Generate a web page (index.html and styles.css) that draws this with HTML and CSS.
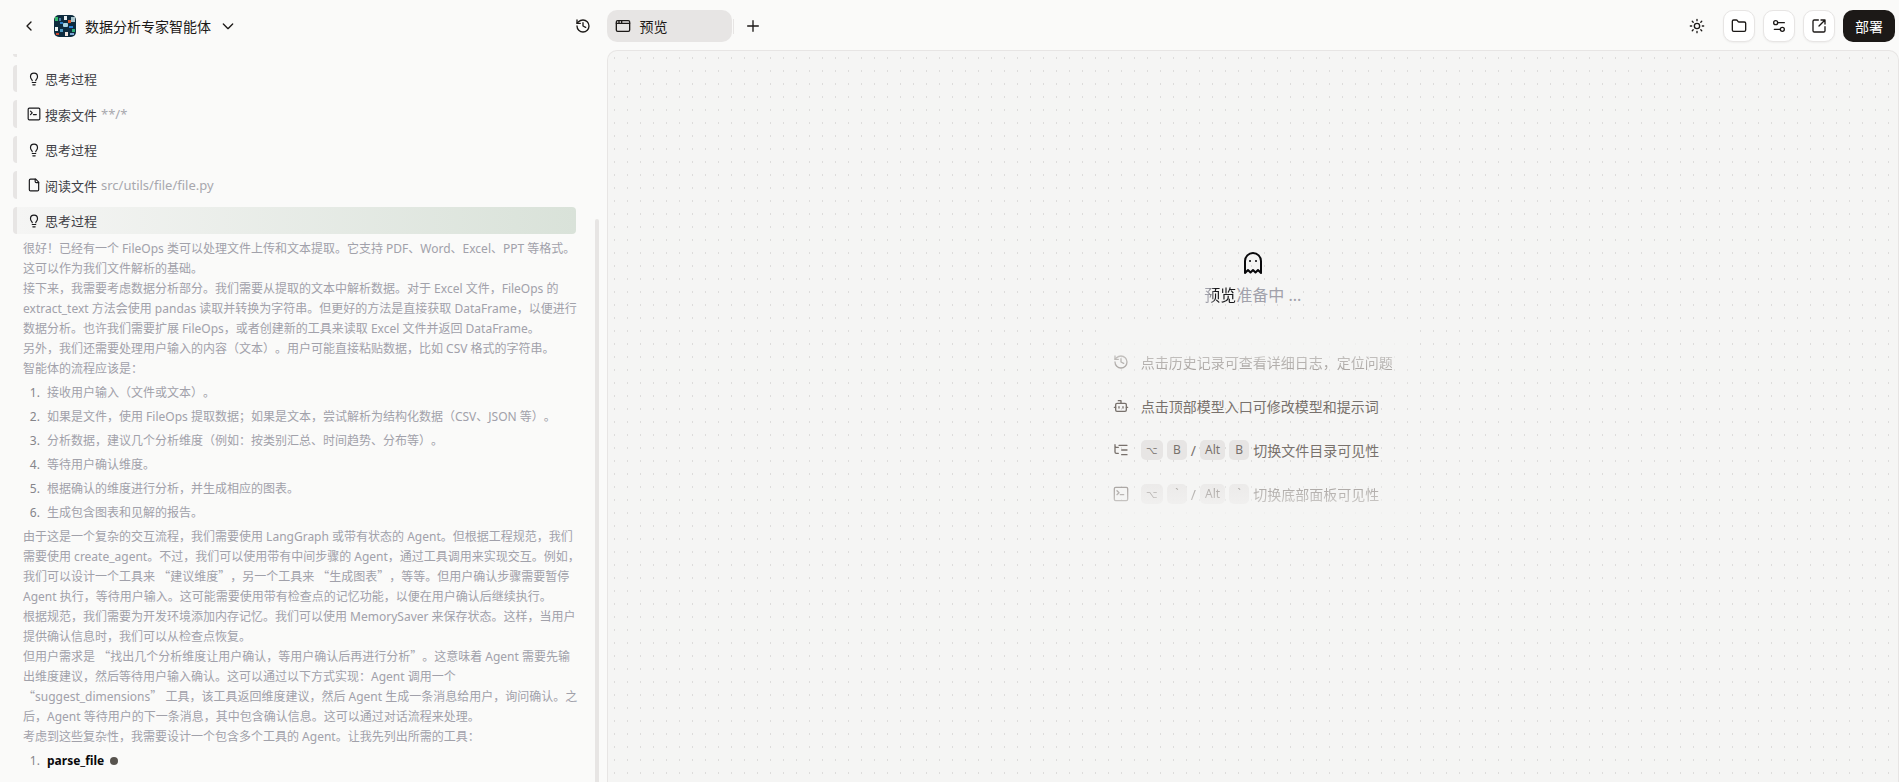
FILE: index.html
```html
<!DOCTYPE html>
<html lang="zh-CN">
 <head>
  <meta charset="utf-8">
  <meta name="viewport" content="width=device-width, initial-scale=1.0">
  <title>数据分析专家智能体</title>
  <link rel="stylesheet" href="styles.css">
 </head>
 <body>
  <svg class="sprite" aria-hidden="true">
   <symbol id="i-back" viewBox="0 0 24 24"><path d="m15 18-6-6 6-6"/></symbol>
   <symbol id="i-down" viewBox="0 0 24 24"><path d="m5 9 7 7 7-7"/></symbol>
   <symbol id="i-plus" viewBox="0 0 24 24"><path d="M4 12h16M12 4v16"/></symbol>
   <symbol id="i-history" viewBox="0 0 24 24"><path d="M3 12a9 9 0 1 0 9-9 9.75 9.75 0 0 0-6.74 2.74L3 8"/><path d="M3 3v5h5M12 7v5l4 2"/></symbol>
   <symbol id="i-window" viewBox="0 0 24 24"><rect x="2" y="4" width="20" height="16" rx="2"/><path d="M2 8h20M6 4v4M10 4v4"/></symbol>
   <symbol id="i-sun" viewBox="0 0 24 24"><circle cx="12" cy="12" r="4"/><path d="M12 2v2M12 20v2M4.9 4.9l1.4 1.4M17.7 17.7l1.4 1.4M2 12h2M20 12h2M6.3 17.7l-1.4 1.4M19.1 4.9l-1.4 1.4"/></symbol>
   <symbol id="i-folder" viewBox="0 0 24 24"><path d="M20 20a2 2 0 0 0 2-2V8a2 2 0 0 0-2-2h-7.9a2 2 0 0 1-1.7-.9L9.6 3.9A2 2 0 0 0 7.9 3H4a2 2 0 0 0-2 2v13a2 2 0 0 0 2 2Z"/></symbol>
   <symbol id="i-settings" viewBox="0 0 24 24"><path d="M20 7h-9M14 17H5"/><circle cx="17" cy="17" r="3"/><circle cx="7" cy="7" r="3"/></symbol>
   <symbol id="i-open" viewBox="0 0 24 24"><path d="M21 13v6a2 2 0 0 1-2 2H5a2 2 0 0 1-2-2V5a2 2 0 0 1 2-2h6M21 3l-9 9M15 3h6v6"/></symbol>
   <symbol id="i-bulb" viewBox="0 0 24 24"><path d="M9 15c0-2-3-3-3-7a6 6 0 0 1 12 0c0 4-3 5-3 7M9 18h6M10 22h4"/></symbol>
   <symbol id="i-terminal" viewBox="0 0 24 24"><rect x="2" y="2" width="20" height="20" rx="2"/><path d="m6 7 3 3-3 3M11 13h5"/></symbol>
   <symbol id="i-file" viewBox="0 0 24 24"><path d="M15 2H6a2 2 0 0 0-2 2v16a2 2 0 0 0 2 2h12a2 2 0 0 0 2-2V7Z"/><path d="M14 2v4a2 2 0 0 0 2 2h4"/></symbol>
   <symbol id="i-ghost" viewBox="0 0 24 24"><path d="M9 10h.01M15 10h.01M12 2a8 8 0 0 0-8 8v12l3-3 2.5 2.5L12 19l2.5 2.5L17 19l3 3V10a8 8 0 0 0-8-8z"/></symbol>
   <symbol id="i-bot" viewBox="0 0 24 24"><path d="M12 8V4H8M2 14h2M20 14h2M15 13v2M9 13v2"/><rect x="4" y="8" width="16" height="12" rx="2"/></symbol>
   <symbol id="i-tree" viewBox="0 0 24 24"><path d="M21 12h-8M21 5H9M21 19h-8M3 4v2c0 1.1.9 2 2 2h3M3 6v9c0 1.1.9 2 2 2h3"/></symbol>
  </svg>

  <header class="topbar">
   <div class="agent">
    <button class="icon-btn" aria-label="返回"><svg class="icon"><use href="#i-back"/></svg></button>
    <button class="agent-name">
     <svg class="avatar" viewBox="0 0 22 22" aria-hidden="true">
      <rect width="22" height="22" rx="5" fill="#0d2b3e"/>
      <rect x="1" y="2" width="3" height="4" fill="#35b86c"/>
      <rect x="5" y="3" width="2" height="3" fill="#4a7fa8"/>
      <rect x="10" y="1" width="3" height="4" fill="#e8eef0"/>
      <rect x="17" y="2" width="4" height="5" fill="#a8c4cc"/>
      <rect x="14" y="5" width="3" height="3" fill="#d8582c"/>
      <rect x="6" y="7" width="3" height="2" fill="#2f80c8"/>
      <rect x="9" y="8" width="5" height="4" rx="1" fill="#a9d5e4"/>
      <rect x="1" y="12" width="3" height="4" fill="#eef2f2"/>
      <rect x="15" y="11" width="4" height="2" fill="#2a7fd6"/>
      <rect x="6" y="14" width="3" height="3" fill="#4f9cc4"/>
      <rect x="11" y="17" width="3" height="4" fill="#f1e3dc"/>
      <rect x="2" y="18" width="3" height="2" fill="#c8452e"/>
      <rect x="18" y="14" width="3" height="3" fill="#2fae78"/>
      <rect x="16" y="18" width="4" height="2" fill="#7ea9d8"/>
     </svg>
     <span>数据分析专家智能体</span>
     <svg class="icon"><use href="#i-down"/></svg>
    </button>
    <button class="icon-btn history" aria-label="历史记录"><svg class="icon"><use href="#i-history"/></svg></button>
   </div>
   <nav class="tabs">
    <button class="tab"><svg class="icon"><use href="#i-window"/></svg>预览</button>
    <span class="divider"></span>
    <button class="icon-btn add" aria-label="新建"><svg class="icon"><use href="#i-plus"/></svg></button>
   </nav>
   <div class="actions">
    <button class="icon-btn" aria-label="主题"><svg class="icon"><use href="#i-sun"/></svg></button>
    <button class="box-btn" aria-label="文件"><svg class="icon"><use href="#i-folder"/></svg></button>
    <button class="box-btn" aria-label="设置"><svg class="icon"><use href="#i-settings"/></svg></button>
    <button class="box-btn" aria-label="打开"><svg class="icon"><use href="#i-open"/></svg></button>
    <button class="deploy">部署</button>
   </div>
  </header>

  <main class="workspace">
   <section class="chat">
    <div class="step step-cut"></div>
    <div class="step"><svg class="icon"><use href="#i-bulb"/></svg>思考过程</div>
    <div class="step step-tool"><svg class="icon"><use href="#i-terminal"/></svg>搜索文件 <span class="arg">**/*</span></div>
    <div class="step"><svg class="icon"><use href="#i-bulb"/></svg>思考过程</div>
    <div class="step step-tool"><svg class="icon"><use href="#i-file"/></svg>阅读文件 <span class="arg">src/utils/file/file.py</span></div>
    <div class="step step-active"><svg class="icon"><use href="#i-bulb"/></svg>思考过程</div>

    <article class="thought">
     <p>很好！已经有一个 FileOps 类可以处理文件上传和文本提取。它支持 PDF、Word、Excel、PPT 等格式。<br>
     这可以作为我们文件解析的基础。<br>
     接下来，我需要考虑数据分析部分。我们需要从提取的文本中解析数据。对于 Excel 文件，FileOps 的<br>
     extract_text 方法会使用 pandas 读取并转换为字符串。但更好的方法是直接获取 DataFrame，以便进行<br>
     数据分析。也许我们需要扩展 FileOps，或者创建新的工具来读取 Excel 文件并返回 DataFrame。<br>
     另外，我们还需要处理用户输入的内容（文本）。用户可能直接粘贴数据，比如 CSV 格式的字符串。<br>
     智能体的流程应该是：</p>
     <ol>
      <li>接收用户输入（文件或文本）。</li>
      <li>如果是文件，使用 FileOps 提取数据；如果是文本，尝试解析为结构化数据（CSV、JSON 等）。</li>
      <li>分析数据，建议几个分析维度（例如：按类别汇总、时间趋势、分布等）。</li>
      <li>等待用户确认维度。</li>
      <li>根据确认的维度进行分析，并生成相应的图表。</li>
      <li>生成包含图表和见解的报告。</li>
     </ol>
     <p>由于这是一个复杂的交互流程，我们需要使用 LangGraph 或带有状态的 Agent。但根据工程规范，我们<br>
     需要使用 create_agent。不过，我们可以使用带有中间步骤的 Agent，通过工具调用来实现交互。例如，<br>
     我们可以设计一个工具来 <q>建议维度</q>，另一个工具来 <q>生成图表</q>，等等。但用户确认步骤需要暂停<br>
     Agent 执行，等待用户输入。这可能需要使用带有检查点的记忆功能，以便在用户确认后继续执行。<br>
     根据规范，我们需要为开发环境添加内存记忆。我们可以使用 MemorySaver 来保存状态。这样，当用户<br>
     提供确认信息时，我们可以从检查点恢复。<br>
     但用户需求是 <q>找出几个分析维度让用户确认，等用户确认后再进行分析</q>。这意味着 Agent 需要先输<br>
     出维度建议，然后等待用户输入确认。这可以通过以下方式实现：Agent 调用一个<br>
     <q>suggest_dimensions</q> 工具，该工具返回维度建议，然后 Agent 生成一条消息给用户，询问确认。之<br>
     后，Agent 等待用户的下一条消息，其中包含确认信息。这可以通过对话流程来处理。<br>
     考虑到这些复杂性，我需要设计一个包含多个工具的 Agent。让我先列出所需的工具：</p>
     <ol>
      <li><strong>parse_file</strong><span class="cursor"></span></li>
     </ol>
    </article>
    <div class="scrollbar"></div>
   </section>

   <section class="preview">
    <svg class="icon ghost"><use href="#i-ghost"/></svg>
    <p class="status"><span class="shine">预览</span>准备中 ...</p>
    <ul class="hints">
     <li class="faint"><svg class="icon"><use href="#i-history"/></svg>点击历史记录可查看详细日志，定位问题</li>
     <li><svg class="icon"><use href="#i-bot"/></svg>点击顶部模型入口可修改模型和提示词</li>
     <li><svg class="icon"><use href="#i-tree"/></svg><span class="keys"><kbd class="opt">⌥</kbd><kbd>B</kbd>/<kbd>Alt</kbd><kbd>B</kbd>切换文件目录可见性</span></li>
     <li class="faint"><svg class="icon"><use href="#i-terminal"/></svg><span class="keys"><kbd class="opt">⌥</kbd><kbd>`</kbd>/<kbd>Alt</kbd><kbd>`</kbd>切换底部面板可见性</span></li>
    </ul>
   </section>
  </main>
 </body>
</html>
```
FILE: styles.css
```css
* {
  box-sizing: border-box;
}

body {
  margin: 0;
  height: 100vh;
  display: flex;
  flex-direction: column;
  overflow: hidden;
  background: #fafaf9;
  color: #1c1917;
  font-family: "Noto Sans", "Noto Sans CJK SC", sans-serif;
  font-size: 14px;
  text-spacing-trim: space-all;
}

button {
  display: flex;
  align-items: center;
  justify-content: center;
  padding: 0;
  border: 0;
  background: none;
  color: inherit;
  font: inherit;
}

.sprite {
  display: none;
}

.icon {
  width: 16px;
  height: 16px;
  flex: none;
  fill: none;
  stroke: currentColor;
  stroke-width: 2;
  stroke-linecap: round;
  stroke-linejoin: round;
}

/* top bar */
.topbar {
  display: flex;
  align-items: center;
  height: 50px;
  padding: 2px 4px 0 0;
  flex: none;
}

.agent {
  display: flex;
  align-items: center;
  width: calc(32% + 1px);
  padding: 0 8px 0 13px;
}

.icon-btn {
  width: 32px;
  height: 32px;
}

.agent-name {
  gap: 9px;
  margin-left: 9px;
}

.avatar {
  width: 22px;
  height: 22px;
}

.history {
  margin-left: auto;
}

.tabs {
  display: flex;
  align-items: center;
}

.tab {
  width: 125px;
  height: 32px;
  padding-left: 8px;
  gap: 8px;
  justify-content: flex-start;
  border-radius: 10px;
  background: #e7e5e4;
}

.divider {
  width: 1px;
  height: 15px;
  margin-left: 1px;
  background: #e7e5e4;
}

.add {
  margin-left: 3px;
}

.actions {
  display: flex;
  gap: 8px;
  margin-left: auto;
}

.actions .icon-btn {
  margin-right: 2px;
}

.box-btn {
  width: 32px;
  height: 32px;
  border: 1px solid #e7e5e4;
  border-radius: 10px;
  background: #fff;
  box-shadow: 0 1px 2px #0000000d;
}

.deploy {
  width: 52px;
  height: 32px;
  border-radius: 10px;
  background: #1c1917;
  color: #fff;
}

/* columns */
.workspace {
  display: flex;
  flex: 1;
  min-height: 0;
}

.chat {
  position: relative;
  width: calc(32% - 1px);
  padding: 4px 23px 0 13px;
  overflow: hidden;
  font-size: 13px;
  color: #3f3f46;
}

.step {
  display: flex;
  align-items: center;
  gap: 4px;
  height: 27px;
  margin: 0 8px 8px 0;
  padding-left: 10px;
  border-left: 4px solid #e7e5e4;
  border-radius: 4px;
}

.step .icon {
  width: 14px;
  height: 14px;
  color: #18181b;
}

.step-cut {
  height: 3px;
  border-radius: 0 0 0 4px;
}

.step-tool {
  height: 28px;
}

.step-active {
  margin-bottom: 5px;
  background: linear-gradient(90deg, #f5f5f4, #d9e2d9);
}

.arg {
  color: #a8a8ae;
}

.thought {
  padding-left: 10px;
  color: #a1a1aa;
  font-size: 12px;
  line-height: 20px;
  white-space: nowrap;
}

.thought p {
  margin: 0;
}

/* full-width quote marks */
.thought q {
  quotes: none;
}

.thought q::before,
.thought q::after {
  font-family: "Noto Sans CJK SC", sans-serif;
  line-height: 1;
}

.thought q::before {
  content: "“";
}

.thought q::after {
  content: "”";
}

.thought ol {
  margin: 0 0 4px;
  padding-left: 20px;
}

.thought li {
  margin-top: 4px;
  padding-left: 4px;
}

.thought li::marker {
  color: #85858a;
}

.thought strong {
  color: #09090b;
}

.cursor {
  display: inline-block;
  width: 8px;
  height: 8px;
  margin-left: 6px;
  border-radius: 50%;
  background: #57534e;
}

.scrollbar {
  position: absolute;
  top: 169px;
  right: 8px;
  bottom: 0;
  width: 4px;
  border-radius: 2px 2px 0 0;
  background: #e7e5e4;
}

/* preview */
.preview {
  display: flex;
  flex: 1;
  flex-direction: column;
  align-items: center;
  padding-top: 200px;
  border: 1px solid #e7e5e4;
  border-bottom: 0;
  border-radius: 10px 10px 0 0;
  background: #f5f5f4 radial-gradient(circle at 50% 7px, #dddcdb 1px, transparent 1px) 0 0 / 13px 13px;
}

.ghost {
  width: 24px;
  height: 24px;
  color: #09090b;
}

.status {
  margin: 8px 0 0;
  color: #a1a1aa;
  font-size: 16px;
  line-height: 24px;
}

.shine {
  background: linear-gradient(90deg, #a1a1aa 15%, #18181b 35%);
  background-clip: text;
  color: transparent;
}

.hints {
  position: relative;
  display: flex;
  flex-direction: column;
  gap: 20px;
  margin: 23px 0 0;
  padding: 20px 16px;
  list-style: none;
  color: #78716c;
}

/* fade the first and last hint into the backdrop */
.hints::before,
.hints::after {
  content: "";
  position: absolute;
  z-index: 1;
  left: 0;
  right: 0;
  height: 60px;
}

.hints::before {
  top: 0;
  background: linear-gradient(#f5f5f4, transparent);
}

.hints::after {
  bottom: 0;
  background: linear-gradient(transparent, #f5f5f4);
}

.hints li {
  display: flex;
  align-items: center;
  gap: 12px;
  height: 24px;
}

.hints .faint {
  opacity: 0.9;
}

.keys {
  display: flex;
  align-items: center;
  gap: 4px;
}

kbd {
  min-width: 20px;
  height: 20px;
  padding: 0 5px;
  border-radius: 5px;
  background: #e7e5e4;
  font-family: inherit;
  font-size: 12px;
  line-height: 20px;
  text-align: center;
}

.opt {
  font-size: 10px;
}
```
